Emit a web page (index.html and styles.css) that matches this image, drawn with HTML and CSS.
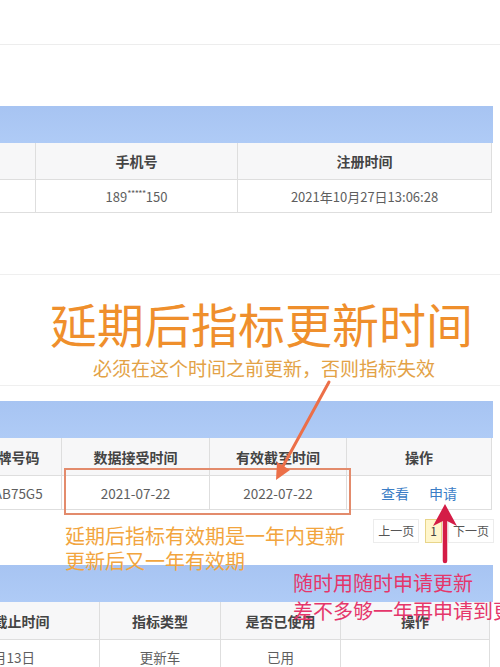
FILE: index.html
```html
<!DOCTYPE html>
<html lang="zh-CN">
<head>
<meta charset="utf-8">
<title>指标更新</title>
<link rel="stylesheet" href="styles.css">
</head>
<body>
<div class="page">
  <div class="topbar"></div>

  <section class="panel panel-1">
    <div class="band"></div>
    <div class="grid g1 head"><div class="cell"></div><div class="cell">手机号</div><div class="cell">注册时间</div></div>
    <div class="grid g1 row"><div class="cell"></div><div class="cell">189<span class="mask">*****</span>150</div><div class="cell">2021年10月27日13:06:28</div></div>
  </section>

  <section class="callout">
    <h1 class="callout-title">延期后指标更新时间</h1>
    <p class="callout-sub">必须在这个时间之前更新，否则指标失效</p>
  </section>

  <section class="panel panel-2">
    <div class="band"></div>
    <div class="grid g2 head"><div class="cell">车牌号码</div><div class="cell">数据接受时间</div><div class="cell">有效截至时间</div><div class="cell">操作</div></div>
    <div class="grid g2 row"><div class="cell">京AB75G5</div><div class="cell">2021-07-22</div><div class="cell">2022-07-22</div><div class="cell ops"><a class="link">查看</a><a class="link">申请</a></div></div>
  </section>

  <div class="pager">
    <span class="pg">上一页</span>
    <span class="pg cur">1</span>
    <span class="pg">下一页</span>
  </div>

  <section class="panel panel-3">
    <div class="band"></div>
    <div class="grid g3 head"><div class="cell">截止时间</div><div class="cell">指标类型</div><div class="cell">是否已使用</div><div class="cell">操作</div></div>
    <div class="grid g3 row"><div class="cell first-date">2022年07月13日</div><div class="cell">更新车</div><div class="cell">已用</div><div class="cell"></div></div>
  </section>

  <div class="hl-box"></div>

  <div class="note note-orange">延期后指标有效期是一年内更新<br>更新后又一年有效期</div>
  <div class="note note-red">随时用随时申请更新<br>差不多够一年再申请到更新</div>

  <svg class="arrows" width="500" height="667" viewBox="0 0 500 667">
    <line x1="329" y1="382" x2="282" y2="468" stroke="#ec6f48" stroke-width="3" stroke-linecap="round"/>
    <polygon points="276,480 290,470 277,462" fill="#ec6f48"/>
    <line x1="445" y1="518" x2="445" y2="561" stroke="#d41c46" stroke-width="4.5" stroke-linecap="round"/>
    <polygon points="445,504 457,526 445,520 433,526" fill="#d41c46"/>
  </svg>
</div>
</body>
</html>
```

FILE: styles.css
```css
* { box-sizing: border-box; }
html, body { margin: 0; padding: 0; background: #fff; }
body {
  font-family: "Noto Sans CJK SC", "Noto Sans", "Liberation Sans", sans-serif;
  color: #555;
  overflow: hidden;
}
.page {
  position: relative;
  width: 500px;
  height: 667px;
  overflow: hidden;
  background: #fff;
}
.topbar {
  height: 45px;
  border-bottom: 1px solid #ededed;
}
.panel { display: flex; flex-direction: column; }
.panel-1 { margin-top: 61px; margin-left: -60px; width: 553px; }
.panel-2 { margin-top: 15px; margin-left: -38px; width: 531px; }
.panel-3 { margin-left: -56px; width: 549px; }
.band {
  height: 37px;
  background: linear-gradient(#a7c4f2, #afcbf6);
}
.grid { display: grid; }
.g1 { grid-template-columns: 96px 202px 254px; }
.g2 { grid-template-columns: 100px 148px 137px 145px; }
.g3 { grid-template-columns: 156px 121px 120px 149px; }
.cell {
  display: flex;
  align-items: center;
  justify-content: center;
  border-right: 1px solid #dedede;
  border-bottom: 1px solid #dedede;
  white-space: nowrap;
}
.head .cell {
  background: #f7f7f8;
  color: #444;
  font-weight: 700;
  font-size: 14px;
}
.row .cell { font-size: 13.5px; color: #5e5e5e; background: #fff; }
.g1.head { height: 37px; }
.g1.row { height: 33px; }
.g1.row .cell { font-size: 13px; }
.g2.head, .g3.head { height: 38px; }
.g2.row, .g3.row { height: 34px; }
.mask { font-size: 9px; position: relative; top: -3px; letter-spacing: -0.5px; }
.first-date { justify-content: flex-end; padding-right: 64px; }
.ops { gap: 20px; }
.link { color: #3b7dc6; font-size: 14px; }

.callout {
  margin-top: 61px;
  height: 112px;
  border-top: 1px solid #efefef;
  border-bottom: 1px solid #efefef;
  padding: 22px 0 0 50px;
}
.callout-title {
  margin: 0;
  font-size: 47px;
  line-height: 52px;
  font-weight: 400;
  color: #ef8f2c;
  white-space: nowrap;
}
.callout-sub {
  margin: 7px 0 0 43px;
  font-size: 19px;
  line-height: 24px;
  color: #e3a246;
  white-space: nowrap;
}

.pager {
  height: 55px;
  display: flex;
  justify-content: flex-end;
  align-items: flex-start;
  gap: 6px;
  padding: 9px 6px 0 0;
}
.pg {
  font-size: 12px;
  line-height: 20px;
  color: #555;
  padding: 1px 4px;
  border: 1px solid #ececec;
}
.pg.cur {
  background: #fff6cc;
  border-color: #e8d58a;
  padding: 1px 4px;
  color: #444;
}

.hl-box {
  position: absolute;
  left: 64px;
  top: 468px;
  width: 287px;
  height: 47px;
  border: 2px solid #e38b6c;
}
.note {
  position: absolute;
  font-size: 20px;
  white-space: nowrap;
}
.note-orange {
  left: 65px;
  top: 523px;
  line-height: 25px;
  color: #f2a53e;
}
.note-red {
  left: 293px;
  top: 569px;
  line-height: 28px;
  color: #e5366b;
}
.arrows {
  position: absolute;
  left: 0;
  top: 0;
  pointer-events: none;
}
```
